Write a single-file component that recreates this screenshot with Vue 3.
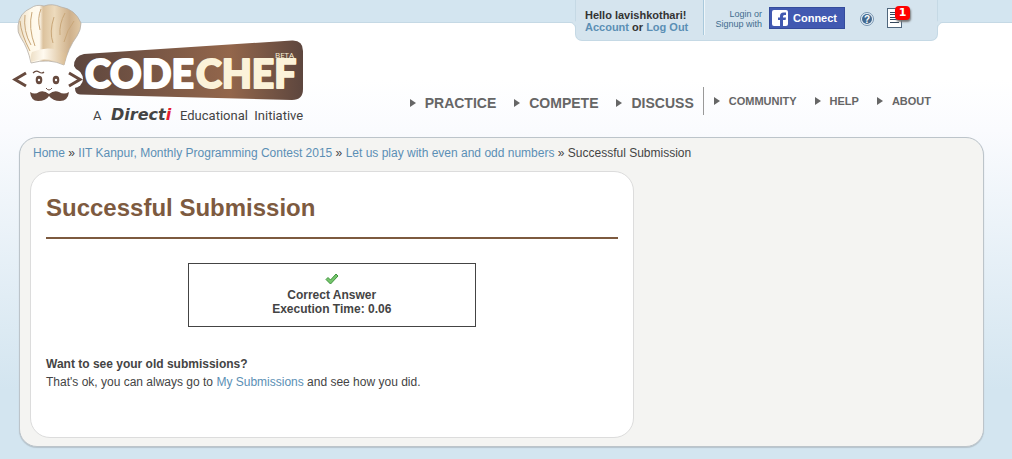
<script setup>
const primary = ['PRACTICE', 'COMPETE', 'DISCUSS']
const secondary = ['COMMUNITY', 'HELP', 'ABOUT']
</script>

<template>
  <div class="page">
    <header class="header">
      <a class="logo" href="#" aria-label="CodeChef home">
        <svg width="304" height="136" viewBox="0 0 304 136">
          <defs>
            <linearGradient id="plate" x1="0" x2="1" y1="0" y2="0">
              <stop offset="0" stop-color="#5d463e" />
              <stop offset=".68" stop-color="#93664b" />
              <stop offset="1" stop-color="#5d463e" />
            </linearGradient>
            <linearGradient id="hat" x1="0" x2="1" y1="0" y2="0">
              <stop offset="0" stop-color="#eadcc4" />
              <stop offset=".2" stop-color="#fff8e8" />
              <stop offset=".34" stop-color="#fffaf0" />
              <stop offset=".4" stop-color="#dcc29d" />
              <stop offset=".58" stop-color="#eddbbd" />
              <stop offset=".82" stop-color="#ceb08b" />
              <stop offset="1" stop-color="#e1c9a6" />
            </linearGradient>
            <linearGradient id="band" x1="0" x2="1" y1="0" y2="0">
              <stop offset="0" stop-color="#eee0c7" />
              <stop offset=".35" stop-color="#fffaf0" />
              <stop offset="1" stop-color="#d7b98f" />
            </linearGradient>
          </defs>
          <path d="M84 54 292 40.500Q303 40 303 51V89Q303 100 292 100L80 94.500Q75 94 75 88L78 82Q86 74 76 69L74 66Q74 56 84 54Z" fill="url(#plate)" />
          <circle cx="74" cy="79" r="9" fill="#fff" />
          <path d="M31 62 63 62 72 72 70 94 48 98 29 93 22 80Z" fill="#fff" />
          <path d="M18 26Q19 13 31 8Q36 4 44 6Q52 3 61 7Q75 9 81 23Q81 30 77 36Q68 48 64 65Q49 58 31 63Q28 48 21 38Q17 32 18 26Z" fill="url(#hat)" stroke="#b6b0a8" stroke-width=".8" />
          <path d="M31 62Q30 56 32 52Q50 44 67 54L64 65Q48 56 31 62Z" fill="url(#band)" />
          <g fill="none" stroke="#c9a779" stroke-width="1">
            <path d="M20 21Q21 34 30 51M25 15Q23 31 31 45M32 12Q28 28 35 46" />
            <path d="M41 9Q37 18 40 30M54 17Q49 32 53 43M65 13Q59 24 60 35M74 21Q67 30 64 42" />
          </g>
          <g fill="none" stroke="#674a3e" stroke-width="3">
            <path d="M26 73 15 79.500 26 86M69 73 80 79.500 69 86" />
            <path d="M33 73Q36 70 39 72T44 72" stroke-width="1.200" />
            <path d="M46 88Q49 92 52 88" stroke-width="1" />
          </g>
          <ellipse cx="39" cy="80" rx="3.300" ry="4.200" fill="#674a3e" />
          <ellipse cx="56" cy="80" rx="3.300" ry="4.200" fill="#674a3e" />
          <circle cx="39" cy="80" r="1.200" fill="#fff" />
          <circle cx="56" cy="80" r="1.200" fill="#fff" />
          <path d="M30 92Q35 95 39 92Q44 90 49 94Q54 90 59 92Q64 95 69 92Q68 101 60 101Q53 101 49 96Q46 101 38 101Q31 101 30 92Z" fill="#674a3e" />
          <text x="85" y="88" class="word white">CODE</text>
          <text x="196" y="88" class="word cream">CHEF</text>
          <text x="275" y="58" class="beta">BETA</text>
          <text x="93" y="120" class="tag">A</text>
          <text x="111" y="120" class="brand">Direct<tspan fill="#e51b2e">i</tspan></text>
          <text x="180" y="120" class="tag">Educational&#160; Initiative</text>
        </svg>
      </a>
      <div class="header-side">
        <div class="account">
          <div class="hello">Hello lavishkothari!<br><a href="#">Account</a> or <a href="#">Log Out</a></div>
          <div class="signup">Login or<br>Signup with</div>
          <button class="connect" type="button">
            <svg width="16" height="16" viewBox="0 0 16 16"><rect width="16" height="16" rx="2" fill="#fff" /><path d="M8 16V10H6V7.500H8V6Q8 2.500 11.500 2.500H14V5H12.500Q11 5 11 6.500V7.500H14L13.600 10H11V16Z" fill="#4159b1" /></svg>
            Connect
          </button>
          <a class="help" href="#" aria-label="Help">
            <svg width="14" height="14" viewBox="0 0 14 14"><circle cx="7" cy="7" r="6.500" fill="#e9f1f8" stroke="#7593af" /><circle cx="7" cy="7" r="5" fill="#42698f" /><text x="7" y="10.500" text-anchor="middle" class="question">?</text></svg>
          </a>
          <a class="notes" href="#" aria-label="Notifications">
            <svg width="15" height="20" viewBox="0 0 15 20"><rect x=".5" y=".5" width="14" height="19" fill="#fff" stroke="#50677d" /><path d="M3 4.500H12M3 6.500H12M3 9.500H12M3 11.500H12M3 14.500H12" stroke="#34495d" /></svg>
            <span class="badge">1</span>
          </a>
        </div>
        <nav class="nav">
          <a v-for="item in primary" :key="item" class="main-link" href="#">{{ item }}</a>
          <span class="divider"></span>
          <a v-for="item in secondary" :key="item" class="small-link" href="#">{{ item }}</a>
        </nav>
      </div>
    </header>
    <main class="panel">
      <nav class="crumbs"><a href="#">Home</a> » <a href="#">IIT Kanpur, Monthly Programming Contest 2015</a> » <a href="#">Let us play with even and odd numbers</a> » Successful Submission</nav>
      <section class="card">
        <h1>Successful Submission</h1>
        <div class="result">
          <svg width="14" height="12" viewBox="0 0 14 12"><path d="M1 6.500 3 4.500 5.500 7 11 1 13 3 5.500 11Z" fill="#75c56c" stroke="#3f943d" stroke-linejoin="round" /></svg>
          <div>Correct Answer</div>
          <div>Execution Time: 0.06</div>
        </div>
        <p><strong>Want to see your old submissions?</strong></p>
        <p>That's ok, you can always go to <a href="#">My Submissions</a> and see how you did.</p>
      </section>
    </main>
  </div>
</template>

<style>
body {
  margin: 0;
  background: #d3e5f0;
}
</style>

<style scoped>
.page {
  box-sizing: border-box;
  min-height: 100vh;
  padding: 0 28px 12px 19px;
  background: linear-gradient(#d3e5f0 22px, #c5d9e5 22px, #c5d9e5 23px, #fff 23px, #fff 80px, #fafbfe 130px, #d3e5f0 390px);
  color: #444;
  font: 12px/18px "Liberation Sans", Arial, sans-serif;
}
a {
  color: #5b8fb5;
  text-decoration: none;
}
.header {
  display: flex;
  justify-content: space-between;
  height: 137px;
}
.logo {
  flex: none;
  margin-left: -19px;
}
.logo svg,
.connect svg,
.help svg,
.notes svg {
  display: block;
}
.word {
  font: 900 39px Lato, sans-serif;
  stroke-width: 2px;
  stroke-linejoin: round;
}
.white {
  fill: #fff;
  stroke: #fff;
}
.cream {
  fill: #fbf2d9;
  stroke: #fbf2d9;
}
.beta {
  font: 8px "Open Sans", sans-serif;
  fill: #fbf2d9;
}
.tag {
  font: 13px Roboto, sans-serif;
  fill: #444;
}
.brand {
  font: italic bold 16px "DejaVu Sans", sans-serif;
  fill: #444;
}
.header-side {
  display: flex;
  flex-direction: column;
  align-items: flex-end;
}
.account {
  position: relative;
  box-sizing: border-box;
  display: flex;
  width: 363px;
  height: 41px;
  margin-right: 46px;
  padding-left: 9px;
  border: solid #c5d9e5;
  border-width: 0 1px 1px;
  border-radius: 0 0 7px 7px;
  background: #d5e4ee;
}
.account::before,
.account::after {
  content: "";
  position: absolute;
  top: 22px;
  width: 6px;
  height: 6px;
  border-top: 1px solid #c5d9e5;
}
.account::before {
  right: 100%;
  border-right: 1px solid #c5d9e5;
  border-top-right-radius: 6px;
  box-shadow: 2px -2px 0 #d5e4ee;
}
.account::after {
  left: 100%;
  border-left: 1px solid #c5d9e5;
  border-top-left-radius: 6px;
  box-shadow: -2px -2px 0 #d5e4ee;
}
.hello {
  width: 118px;
  height: 26px;
  padding-top: 9px;
  border-right: 1px solid #a9c9dc;
  box-shadow: 1px 0 #eef5f9;
  color: #333;
  font-weight: bold;
  font-size: 11px;
  line-height: 12px;
}
.signup {
  width: 58px;
  padding-top: 9px;
  color: #426d8e;
  font-size: 9px;
  line-height: 10px;
  text-align: right;
}
.connect {
  display: flex;
  align-items: center;
  gap: 5px;
  width: 76px;
  height: 22px;
  margin: 7px 0 0 7px;
  padding: 0 2px;
  border: 1px solid #344b9b;
  background: #4159b1;
  color: #fff;
  font: bold 11px "Liberation Sans", Arial, sans-serif;
}
.help {
  margin: 12px 0 0 15px;
}
.notes {
  position: relative;
  margin: 8px 0 0 13px;
}
.badge {
  position: absolute;
  top: -2px;
  left: 8px;
  width: 15px;
  height: 14px;
  border-radius: 4px;
  background: #f00;
  box-shadow: 1px 2px 2px #777;
  color: #fff;
  font: bold 11px/14px "DejaVu Sans", sans-serif;
  text-align: center;
}
.question {
  font: bold 10px "Liberation Sans", sans-serif;
  fill: #fff;
}
.nav {
  display: flex;
  gap: 18px;
  margin: 46px 53px 0 0;
}
.nav a {
  display: flex;
  align-items: center;
  gap: 9px;
  color: #666;
  font-weight: bold;
}
.nav a::before {
  content: "";
  border: solid transparent;
  border-width: 4px 0 4px 6px;
  border-left-color: #666;
}
.main-link {
  height: 32px;
  font-size: 14px;
}
.small-link {
  height: 28px;
  font-size: 11px;
}
.divider {
  width: 1px;
  height: 28px;
  margin: 0 -8px 0 -9px;
  background: #999;
}
.panel {
  box-sizing: border-box;
  padding: 6px 10px 8px;
  border: 1px solid #bcc4ca;
  border-radius: 18px;
  background: #f4f4f2;
  box-shadow: 0 1px 1px #b5c3cc;
}
.crumbs {
  margin-left: 3px;
}
.card {
  box-sizing: border-box;
  width: 64%;
  min-height: 267px;
  margin-top: 9px;
  padding: 20px 15px;
  border: 1px solid #dcdcdc;
  border-radius: 20px;
  background: #fff;
}
h1 {
  margin: 0 0 24px;
  padding-bottom: 13px;
  border-bottom: 2px solid #7d5a3f;
  color: #7d5a3f;
  font-size: 24px;
  line-height: 32px;
}
.result {
  box-sizing: border-box;
  width: 288px;
  margin: 0 auto 28px;
  padding: 9px 0 10px;
  border: 1px solid #444;
  font-weight: bold;
  line-height: 14px;
  text-align: center;
}
.result svg {
  display: block;
  margin: 0 auto 3px;
}
p {
  margin: 0;
}
</style>
